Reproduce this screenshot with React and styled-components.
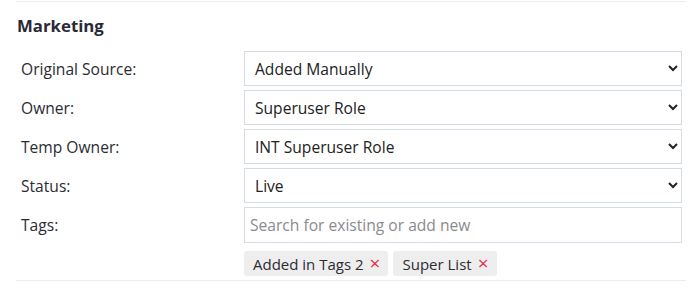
import React from 'react';
import styled, { createGlobalStyle } from 'styled-components';

const GlobalStyle = createGlobalStyle`
  body {
    margin: 0;
    background: #fff;
    font-family: "Open Sans", "Noto Sans", sans-serif;
    color: #2b2b33;
  }
`;

const Section = styled.section`
  margin: 1px 2px 0 16px;
  border-top: 1px solid #eceef4;
  border-bottom: 1px solid #eceef4;
  padding-bottom: 4px;
`;

const Heading = styled.h3`
  margin: 0;
  padding: 12px 0 0 1px;
  height: 36px;
  box-sizing: border-box;
  font-size: 16.8px;
  font-weight: 700;
  color: #2a2a35;
`;

const Form = styled.div`
  display: grid;
  grid-template-columns: 228px 438px;
  row-gap: 4px;
  padding-top: 13px;
`;

const Label = styled.label`
  display: flex;
  align-items: center;
  padding-left: 5px;
  height: 35px;
  font-size: 15.6px;
  color: #2b2b33;
`;

const Select = styled.select`
  height: 35px;
  width: 100%;
  box-sizing: border-box;
  border: 1px solid #d6dbe8;
  border-radius: 0;
  background: #fff;
  padding: 0 6px;
  font-family: inherit;
  font-size: 15.6px;
  color: #222;
  outline: none;
`;

const Input = styled.input`
  height: 36px;
  width: 100%;
  box-sizing: border-box;
  border: 1px solid #d6dbe8;
  padding: 0 5px;
  font-family: inherit;
  font-size: 15.6px;
  color: #222;
  outline: none;
  &::placeholder {
    color: #8a8a8f;
  }
`;

const Tags = styled.div`
  grid-column: 2;
  display: flex;
  gap: 5px;
  padding-top: 4px;
`;

const Tag = styled.span`
  display: inline-flex;
  align-items: center;
  gap: 6px;
  height: 25px;
  padding: 0 8px 0 9px;
  background: #eeeeee;
  border-radius: 3px;
  font-size: 15px;
  color: #2b2b33;
`;

const Remove = styled.span`
  color: #e8304f;
  font-size: 19px;
  font-weight: 500;
  line-height: 1;
`;

const rows = [
  { label: 'Original Source:', value: 'Added Manually' },
  { label: 'Owner:', value: 'Superuser Role' },
  { label: 'Temp Owner:', value: 'INT Superuser Role' },
  { label: 'Status:', value: 'Live' },
];

export default function App() {
  return (
    <>
      <GlobalStyle />
      <Section>
        <Heading>Marketing</Heading>
        <Form>
          {rows.map((r) => (
            <React.Fragment key={r.label}>
              <Label>{r.label}</Label>
              <Select defaultValue={r.value}>
                <option>{r.value}</option>
              </Select>
            </React.Fragment>
          ))}
          <Label>Tags:</Label>
          <Input placeholder="Search for existing or add new" />
          <Tags>
            <Tag>
              Added in Tags 2<Remove>×</Remove>
            </Tag>
            <Tag>
              Super List<Remove>×</Remove>
            </Tag>
          </Tags>
        </Form>
      </Section>
    </>
  );
}
